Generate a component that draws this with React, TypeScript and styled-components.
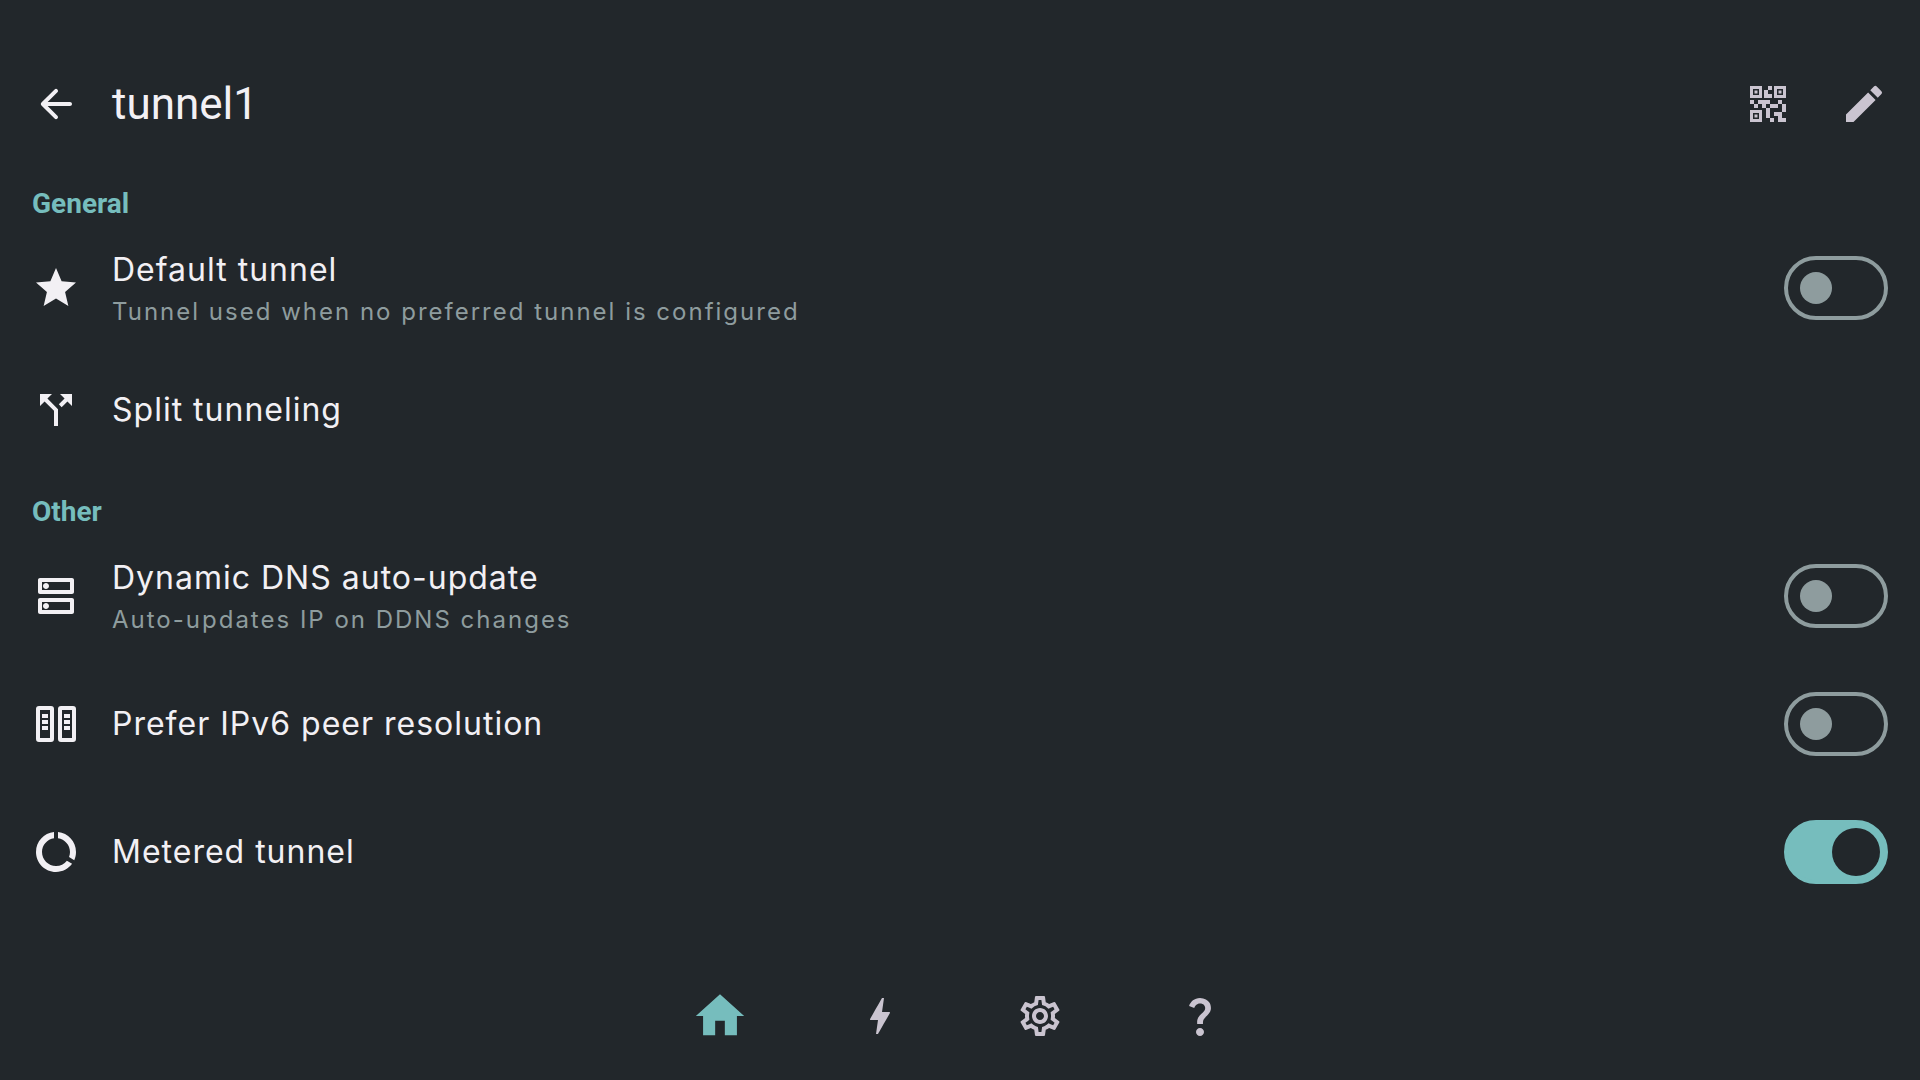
import React from "react";
import styled, { createGlobalStyle, css } from "styled-components";
import {
  MdQrCode2,
  MdEdit,
  MdStar,
  MdCallSplit,
  MdOutlineDns,
  MdDataUsage,
  MdHome,
  MdBolt,
  MdOutlineSettings,
  MdQuestionMark,
} from "react-icons/md";

const colors = {
  background: "#22272b",
  text: "#f2f0f4",
  muted: "#8e9c9e",
  action: "#cac4d0",
  accent: "#76bdbd",
};

const GlobalStyle = createGlobalStyle`
  *, *::before, *::after { box-sizing: border-box; }
  body {
    margin: 0;
    background: ${colors.background};
    color: ${colors.text};
    font-family: Inter, "Open Sans", sans-serif;
  }
`;

const Screen = styled.div`
  display: flex;
  flex-direction: column;
  min-height: 100vh;
`;

const TopBar = styled.header`
  display: flex;
  align-items: center;
  padding: 56px 8px 0;
`;

const IconButton = styled.button<{ $color?: string }>`
  display: grid;
  place-items: center;
  width: 96px;
  height: 96px;
  padding: 0;
  border: 0;
  background: none;
  color: ${(p) => p.$color ?? colors.action};
  cursor: pointer;
`;

const Title = styled.h1`
  flex: 1;
  margin: 0 0 0 8px;
  font: 400 44px/56px Roboto, sans-serif;
`;

const Content = styled.main`
  flex: 1;
  padding-top: 8px;
`;

const SectionTitle = styled.h2`
  margin: 0;
  padding: 24px 32px 0;
  font: 700 28px/40px Roboto, sans-serif;
  color: ${colors.accent};
`;

const rowStyles = css`
  display: flex;
  align-items: center;
  gap: 32px;
  width: 100%;
  padding: 0 32px;
  cursor: pointer;
`;

const SwitchRow = styled.label`
  ${rowStyles}
  min-height: 128px;
`;

const LinkRow = styled.button`
  ${rowStyles}
  min-height: 116px;
  border: 0;
  background: none;
  color: inherit;
  font: inherit;
  text-align: left;
`;

const Texts = styled.span`
  display: flex;
  flex: 1;
  flex-direction: column;
`;

const Name = styled.span`
  font-size: 32px;
  line-height: 48px;
  letter-spacing: 1px;
`;

const Hint = styled.span`
  font-size: 24px;
  line-height: 36px;
  letter-spacing: 2px;
  color: ${colors.muted};
`;

const Switch = styled.input`
  appearance: none;
  display: flex;
  align-items: center;
  width: 104px;
  height: 64px;
  margin: 0;
  padding: 0 12px;
  border: 4px solid ${colors.muted};
  border-radius: 32px;
  cursor: pointer;

  &::before {
    content: "";
    width: 32px;
    height: 32px;
    border-radius: 50%;
    background: ${colors.muted};
  }

  &:checked {
    justify-content: flex-end;
    padding: 0 4px;
    border-color: ${colors.accent};
    background: ${colors.accent};
  }

  &:checked::before {
    width: 48px;
    height: 48px;
    background: ${colors.background};
  }
`;

const BottomBar = styled.nav`
  display: flex;
  align-items: center;
  justify-content: center;
  gap: 64px;
  height: 128px;
`;

const ServersIcon = () => (
  <svg width="48" height="48" viewBox="0 0 24 24" fill="currentColor" aria-hidden="true">
    <path
      fillRule="evenodd"
      d="M3.5 3h6A1.5 1.5 0 0 1 11 4.5v15A1.5 1.5 0 0 1 9.5 21h-6A1.5 1.5 0 0 1 2 19.500v-15A1.500 1.500 0 0 1 3.500 3zM4 5v14h5V5zM14.500 3h6A1.500 1.500 0 0 1 22 4.500v15a1.500 1.500 0 0 1-1.500 1.500h-6a1.500 1.500 0 0 1-1.500-1.500v-15A1.500 1.500 0 0 1 14.500 3zM15 5v14h5V5zM5 7h3v2H5zM5 10h3v2H5zM5 13h3v2H5zM16 7h3v2h-3zM16 10h3v2h-3zM16 13h3v2h-3z"
    />
  </svg>
);

const BackIcon = () => (
  <svg width="48" height="48" viewBox="0 0 24 24" fill="currentColor" aria-hidden="true">
    <path d="M19 11H7.83l4.88-4.88c.39-.39.39-1.03 0-1.42a.996.996 0 0 0-1.41 0l-6.59 6.59a.996.996 0 0 0 0 1.41l6.59 6.59a.996.996 0 1 0 1.41-1.41L7.83 13H19c.55 0 1-.45 1-1s-.45-1-1-1z" />
  </svg>
);

type SettingProps = {
  icon: React.ReactNode;
  name: string;
  hint?: string;
  checked?: boolean;
};

const Setting = ({ icon, name, hint, checked }: SettingProps) => {
  const body = (
    <>
      {icon}
      <Texts>
        <Name>{name}</Name>
        {hint && <Hint>{hint}</Hint>}
      </Texts>
    </>
  );

  if (checked === undefined) {
    return <LinkRow type="button">{body}</LinkRow>;
  }

  return (
    <SwitchRow>
      {body}
      <Switch type="checkbox" role="switch" defaultChecked={checked} />
    </SwitchRow>
  );
};

export default function App() {
  return (
    <Screen>
      <GlobalStyle />
      <TopBar>
        <IconButton $color={colors.text} aria-label="Back">
          <BackIcon />
        </IconButton>
        <Title>tunnel1</Title>
        <IconButton aria-label="Show QR code">
          <MdQrCode2 size={48} />
        </IconButton>
        <IconButton aria-label="Edit tunnel">
          <MdEdit size={48} />
        </IconButton>
      </TopBar>
      <Content>
        <section>
          <SectionTitle>General</SectionTitle>
          <Setting
            icon={<MdStar size={48} />}
            name="Default tunnel"
            hint="Tunnel used when no preferred tunnel is configured"
            checked={false}
          />
          <Setting icon={<MdCallSplit size={48} />} name="Split tunneling" />
        </section>
        <section>
          <SectionTitle>Other</SectionTitle>
          <Setting
            icon={<MdOutlineDns size={48} />}
            name="Dynamic DNS auto-update"
            hint="Auto-updates IP on DDNS changes"
            checked={false}
          />
          <Setting icon={<ServersIcon />} name="Prefer IPv6 peer resolution" checked={false} />
          <Setting icon={<MdDataUsage size={48} />} name="Metered tunnel" checked />
        </section>
      </Content>
      <BottomBar>
        <IconButton $color={colors.accent} aria-label="Home">
          <MdHome size={58} />
        </IconButton>
        <IconButton aria-label="Auto tunnel">
          <MdBolt size={48} />
        </IconButton>
        <IconButton aria-label="Settings">
          <MdOutlineSettings size={48} />
        </IconButton>
        <IconButton aria-label="Support">
          <MdQuestionMark size={48} />
        </IconButton>
      </BottomBar>
    </Screen>
  );
}
